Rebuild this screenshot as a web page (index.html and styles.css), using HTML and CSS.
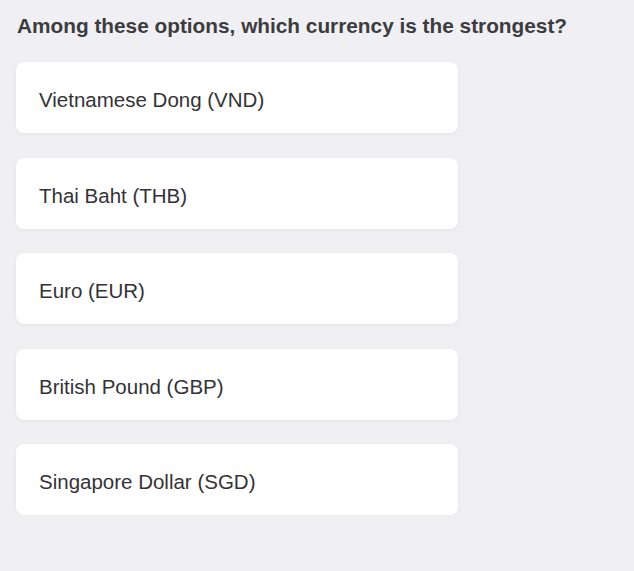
FILE: index.html
```html
<!DOCTYPE html>
<html>
<head>
<meta charset="utf-8">
<link rel="stylesheet" href="styles.css">
</head>
<body>
<main class="quiz">
  <h1 class="question">Among these options, which currency is the strongest?</h1>
  <ul class="options">
    <li class="option">Vietnamese Dong (VND)</li>
    <li class="option">Thai Baht (THB)</li>
    <li class="option">Euro (EUR)</li>
    <li class="option">British Pound (GBP)</li>
    <li class="option">Singapore Dollar (SGD)</li>
  </ul>
</main>
</body>
</html>
```

FILE: styles.css
```css
html, body {
  margin: 0;
  padding: 0;
  background: #f0f0f4;
  font-family: "Liberation Sans", Arial, sans-serif;
}
.quiz {
  padding: 14px 16px 0 16px;
}
.question {
  margin: 0 0 0 1px;
  font-size: 20.8px;
  line-height: 24px;
  font-weight: bold;
  color: #3c3c3f;
}
.options {
  list-style: none;
  margin: 24px 0 0 0;
  padding: 0;
  width: 442px;
  display: flex;
  flex-direction: column;
  gap: 24.5px;
}
.option {
  height: 71px;
  box-sizing: border-box;
  padding: 26px 23px 0 23px;
  line-height: 24px;
  background: #ffffff;
  border-radius: 8px;
  box-shadow: 0 1px 4px rgba(0, 0, 0, 0.05);
  font-size: 20.5px;
  color: #333336;
}
```
